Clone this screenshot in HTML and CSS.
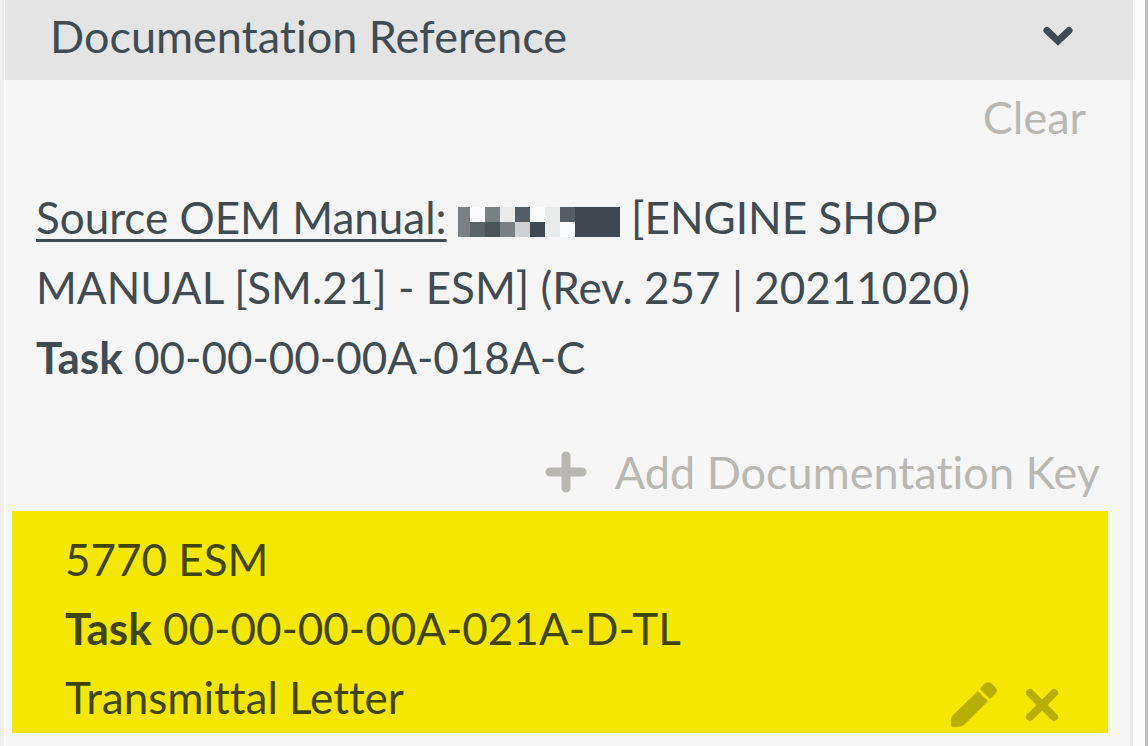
FILE: index.html
```html
<!DOCTYPE html>
<html lang="en">
<head>
    <meta charset="UTF-8">
    <meta name="viewport" content="width=device-width, initial-scale=1.0">
    <title>Documentation Reference</title>
    <link rel="stylesheet" href="styles.css">
</head>
<body>
    <section class="panel">
        <header class="panel-header">
            <h1>Documentation Reference</h1>
            <button type="button" class="icon-btn" aria-label="Collapse">
                <svg width="30" height="20" viewBox="0 0 30 20"><path d="M4 4.500L15 15L26 4.500" fill="none" stroke="currentColor" stroke-width="7" stroke-linecap="round" stroke-linejoin="miter"/></svg>
            </button>
        </header>
        <div class="panel-body">
            <div class="clear-row">
                <button type="button" class="text-btn">Clear</button>
            </div>
            <div class="source">
                <p>
                    <u>Source OEM Manual:</u>
                    <svg class="redacted" width="162" height="30" viewBox="0 0 162 30" shape-rendering="crispEdges" role="img" aria-label="Redacted">
                        <path fill="#7b8083" d="M0 0h12v30H0zM27 0h15v15H27zM42 15h15v15H42z"/>
                        <path fill="#e9eaea" d="M42 0h15v15H42zM87 0h15v30H87z"/>
                        <path fill="#545d64" d="M57 0h15v15H57zM102 0h15v15h-15z"/>
                        <path fill="#5b6466" d="M12 15h15v15H12z"/>
                        <path fill="#4a5356" d="M27 15h15v15H27z"/>
                        <path fill="#cfd0d1" d="M57 15h15v15H57z"/>
                        <path fill="#f8fafb" d="M12 0h15v15H12zM72 0h15v15H72zM102 15h15v15h-15z"/>
                        <path fill="#3f4850" d="M72 15h15v15H72zM117 0h45v30h-45z"/>
                    </svg>
                    [ENGINE SHOP MANUAL [SM.21] - ESM] (Rev. 257 | 20211020)
                </p>
                <p><b>Task</b> 00-00-00-00A-018A-C</p>
            </div>
            <div class="add-row">
                <button type="button" class="text-btn">
                    <svg width="42" height="42" viewBox="0 0 42 42"><path d="M21 5v32M5 21h32" fill="none" stroke="currentColor" stroke-width="9" stroke-linecap="round"/></svg>
                    Add Documentation Key
                </button>
            </div>
            <article class="doc-key">
                <div class="doc-key-text">
                    <p>5770 ESM</p>
                    <p><b>Task</b> 00-00-00-00A-021A-D-TL</p>
                    <p>Transmittal Letter</p>
                </div>
                <div class="doc-key-actions">
                    <button type="button" class="icon-btn" aria-label="Edit">
                        <svg width="48" height="48" viewBox="0 0 48 48" fill="currentColor"><path d="M28 10L38 20L15 43Q12 46 8 46H3Q1 46 1 44V38Q1 36 3 34zM30 8L34 3Q37 0 41 2L45 6Q49 10 45 13L40 18z"/></svg>
                    </button>
                    <button type="button" class="icon-btn" aria-label="Remove">
                        <svg width="32" height="48" viewBox="0 0 32 48"><path d="M4 12l24 24M28 12L4 36" fill="none" stroke="currentColor" stroke-width="8" stroke-linecap="round"/></svg>
                    </button>
                </div>
            </article>
        </div>
    </section>
</body>
</html>
```
FILE: styles.css
```css
:root {
    --text-color: #414b52;
    --muted-color: #b9b8b4;
    --panel-bg: #f6f6f6;
    --header-bg: #e4e4e4;
    --highlight: #f6e700;
    --highlight-text: #424500;
    --highlight-icon: #b9ad00;
}

* {
    box-sizing: border-box;
    margin: 0;
    padding: 0;
}

body {
    min-height: 100vh;
    display: flex;
    padding: 0 12px 0 1px;
    background-color: #fafafa;
    border-right: 3px solid #c0c0c0;
    border-left: 4px solid #eeeeee;
    font-family: Lato, "Open Sans", sans-serif;
    font-size: 44px;
    font-variant-ligatures: none;
    line-height: 70px;
    color: var(--text-color);
}

.panel {
    flex: 1;
    background-color: var(--panel-bg);
}

.panel-header {
    display: flex;
    align-items: center;
    justify-content: space-between;
    height: 80px;
    padding: 0 60px 8px 45px;
    background-color: var(--header-bg);
}

h1 {
    font-size: 45px;
    font-weight: 400;
}

button {
    border: none;
    background: none;
    font: inherit;
    font-variant-ligatures: none;
    color: inherit;
    cursor: pointer;
}

svg {
    display: block;
}

.panel-body {
    min-height: calc(100vh - 80px);
    padding: 2px 22px 12px 7px;
    border-right: 3px solid #e9e9e9;
}

.text-btn {
    display: flex;
    align-items: center;
    gap: 28px;
    font-size: 45px;
    color: var(--muted-color);
}

.clear-row,
.add-row {
    display: flex;
    justify-content: flex-end;
}

.clear-row {
    padding-right: 22px;
}

.source {
    padding: 30px 120px 0 24px;
}

.source u {
    text-decoration-thickness: 3px;
    text-underline-offset: 5px;
}

.redacted {
    display: inline-block;
    vertical-align: -3px;
}

.add-row {
    padding: 45px 8px 4px 0;
}

.doc-key {
    display: flex;
    align-items: flex-end;
    justify-content: space-between;
    padding: 14px 50px 1px 53px;
    background-color: var(--highlight);
    color: var(--highlight-text);
    line-height: 69px;
}

.doc-key-actions {
    display: flex;
    gap: 28px;
    padding-bottom: 3px;
    color: var(--highlight-icon);
}
```
